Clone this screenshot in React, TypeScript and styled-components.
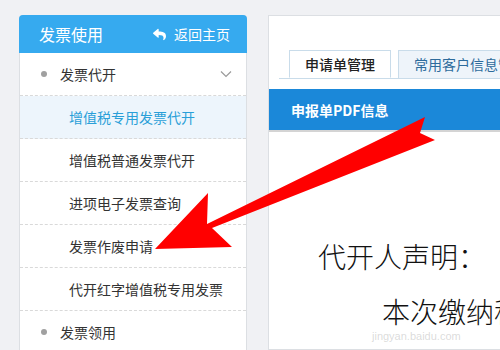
import styled, { createGlobalStyle } from 'styled-components';
import { FaReply } from 'react-icons/fa';

const GlobalStyle = createGlobalStyle`
  html, body {
    margin: 0;
    padding: 0;
    background: #f0f1f4;
    overflow: hidden;
  }
  body {
    font-family: "Noto Sans CJK SC", "Noto Sans", sans-serif;
  }
`;

const Page = styled.div`
  position: relative;
  display: flex;
  gap: 21px;
  padding: 15px 0 0 19px;
  width: 500px;
  height: 350px;
  box-sizing: border-box;
  overflow: hidden;
`;

const Sidebar = styled.aside`
  flex: 0 0 228px;
  background: #fff;
  border: 1px solid #dcdfe3;
  border-bottom: none;
  border-radius: 4px 4px 0 0;
  box-sizing: border-box;
`;

const SideHeader = styled.div`
  height: 38px;
  margin: -1px -1px 0;
  padding: 0 17px 0 20px;
  background: #36aaef;
  border-radius: 4px 4px 0 0;
  display: flex;
  align-items: center;
  justify-content: space-between;
  color: #fff;
`;

const SideTitle = styled.span`
  font-size: 16px;
  line-height: 20px;
`;

const BackLink = styled.span`
  display: flex;
  align-items: center;
  gap: 8px;
  font-size: 14px;
  line-height: 18px;
`;

const MenuRow = styled.div<{ $active?: boolean; $sub?: boolean }>`
  height: 43px;
  box-sizing: border-box;
  border-bottom: 1px dashed #d9d9d9;
  display: flex;
  align-items: center;
  padding-left: ${({ $sub }) => ($sub ? '49px' : '21px')};
  padding-right: 8px;
  font-size: 14px;
  line-height: 18px;
  color: ${({ $active }) => ($active ? '#2a9fd8' : '#333')};
  background: ${({ $active }) => ($active ? '#edf5fc' : '#fff')};
`;

const Dot = styled.span`
  width: 6px;
  height: 6px;
  border-radius: 50%;
  background: #a0a0a0;
  margin-right: 13px;
`;

const Chevron = styled.svg`
  margin-left: auto;
  margin-right: 6px;
`;

const Main = styled.main`
  flex: 0 0 320px;
  background: #fff;
  border: 1px solid #dcdfe3;
  border-right: none;
  box-sizing: border-box;
  padding-top: 34px;
`;

const TabStrip = styled.div`
  display: flex;
  gap: 7px;
  margin-left: 10px;
  padding-left: 10px;
  border-bottom: 1px solid #c9dcea;
  height: 28px;
`;

const Tab = styled.div<{ $active?: boolean }>`
  height: 28px;
  box-sizing: border-box;
  padding: 0 15px 0 15px;
  border: 1px solid #c9dcea;
  border-bottom: ${({ $active }) => ($active ? '1px solid #fff' : 'none')};
  background: ${({ $active }) => ($active ? '#fff' : '#eef4fa')};
  color: ${({ $active }) => ($active ? '#222' : '#2d6b9c')};
  font-size: 14px;
  font-weight: ${({ $active }) => ($active ? 500 : 400)};
  line-height: 26px;
  white-space: nowrap;
`;

const InfoBar = styled.div`
  margin-top: 10px;
  height: 41px;
  background: #1b88d9;
  border-bottom: 2px solid #d4d4d4;
  display: flex;
  align-items: center;
  padding-left: 22px;
  color: #fff;
  font-size: 14px;
  font-weight: 700;
`;

const Doc = styled.div`
  padding: 97px 0 0 49px;
  font-size: 28px;
  font-weight: 300;
  color: #111;
  line-height: 55px;
  white-space: nowrap;
`;

const DocLine = styled.div<{ $indent?: number }>`
  padding-left: ${({ $indent }) => $indent ?? 0}px;
`;

const Watermark = styled.div`
  position: absolute;
  left: 372px;
  top: 330px;
  font-family: "Liberation Sans", sans-serif;
  font-size: 11px;
  color: rgba(150, 150, 150, 0.35);
`;

const Overlay = styled.svg`
  position: absolute;
  left: 0;
  top: 0;
  pointer-events: none;
`;

const subItems = ['增值税专用发票代开', '增值税普通发票代开', '进项电子发票查询', '发票作废申请', '代开红字增值税专用发票'];

export default function App() {
  return (
    <>
      <GlobalStyle />
      <Page>
        <Sidebar>
          <SideHeader>
            <SideTitle>发票使用</SideTitle>
            <BackLink>
              <FaReply size={13} />
              返回主页
            </BackLink>
          </SideHeader>
          <MenuRow>
            <Dot />
            发票代开
            <Chevron width="12" height="8" viewBox="0 0 12 8">
              <path d="M1 1.5 L6 6.5 L11 1.5" fill="none" stroke="#9a9a9a" strokeWidth="1.2" />
            </Chevron>
          </MenuRow>
          {subItems.map((s, i) => (
            <MenuRow key={s} $sub $active={i === 0}>
              {s}
            </MenuRow>
          ))}
          <MenuRow>
            <Dot />
            发票领用
          </MenuRow>
        </Sidebar>
        <Main>
          <TabStrip>
            <Tab $active>申请单管理</Tab>
            <Tab>常用客户信息管理</Tab>
          </TabStrip>
          <InfoBar>申报单PDF信息</InfoBar>
          <Doc>
            <DocLine>代开人声明：</DocLine>
            <DocLine $indent={64}>本次缴纳税款</DocLine>
          </Doc>
        </Main>
        <Watermark>jingyan.baidu.com</Watermark>
        <Overlay width="500" height="350" viewBox="0 0 500 350">
          <polygon
            points="155,249 208,193 207,224 425,117 420,133 435,140 212,228 232,247"
            fill="#ff0000"
          />
        </Overlay>
      </Page>
    </>
  );
}
